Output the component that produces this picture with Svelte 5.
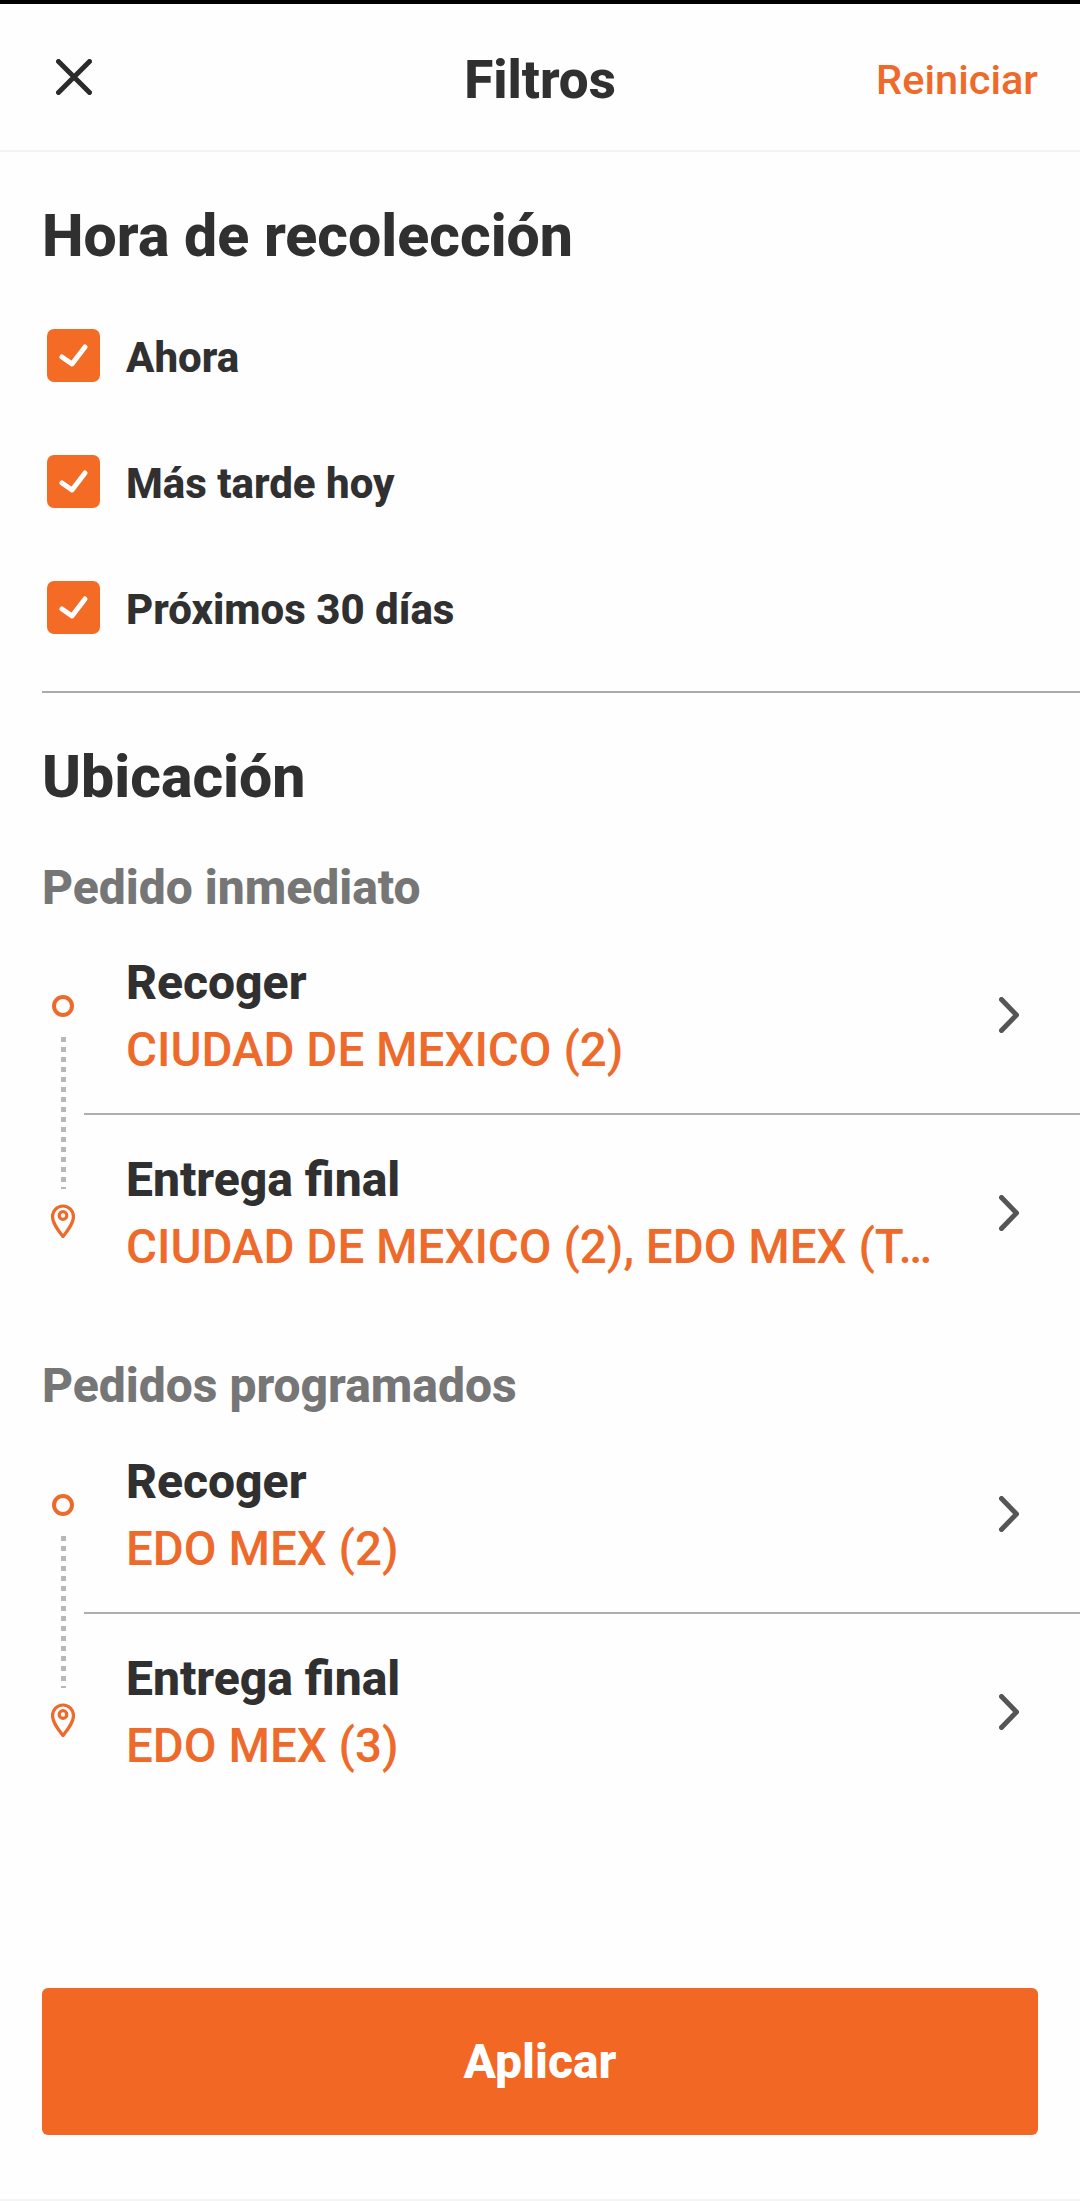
<script>
  const times = ['Ahora', 'Más tarde hoy', 'Próximos 30 días'];
  const groups = [
    { title: 'Pedido inmediato', rows: [['Recoger', 'CIUDAD DE MEXICO (2)'], ['Entrega final', 'CIUDAD DE MEXICO (2), EDO MEX (T…']] },
    { title: 'Pedidos programados', rows: [['Recoger', 'EDO MEX (2)'], ['Entrega final', 'EDO MEX (3)']] }
  ];
</script>

<div class="page">
  <div class="status"></div>
  <header class="header">
    <svg class="close" width="36" height="36" viewBox="0 0 36 36"><path d="M2.500 2.500 33.500 33.500M33.500 2.500 2.500 33.500" /></svg>
    <h1>Filtros</h1>
    <span class="reset">Reiniciar</span>
  </header>

  <main class="content">
    <section class="time">
      <h2>Hora de recolección</h2>
      <ul class="checks">
        {#each times as t}
          <li>
            <span class="box">
              <svg width="52" height="53" viewBox="0 0 52 53"><path d="M15 28 25 35 38 18" /></svg>
            </span>
            <span class="check-label">{t}</span>
          </li>
        {/each}
      </ul>
    </section>

    <section class="location">
      <h2>Ubicación</h2>
      {#each groups as g}
        <h3>{g.title}</h3>
        <div class="group">
          <div class="track">
            <svg class="origin" width="22" height="22" viewBox="0 0 22 22"><circle cx="11" cy="11" r="9" /></svg>
            <div class="dots"></div>
            <svg class="pin" width="24" height="34" viewBox="0 0 24 34">
              <path d="M12 32.500C7 26 1.500 19.500 1.500 12.500a10.500 10.500 0 0 1 21 0C22.500 19.500 17 26 12 32.500Z" />
              <circle cx="12" cy="11.500" r="3.800" />
            </svg>
          </div>
          <div class="rows">
            {#each g.rows as r, i}
              <div class="row" class:ruled={i === 0}>
                <div class="texts">
                  <div class="label">{r[0]}</div>
                  <div class="value">{r[1]}</div>
                </div>
                <svg class="chev" width="20" height="36" viewBox="0 0 20 36"><path d="M2.500 2.500 17.500 18 2.500 33.500" /></svg>
              </div>
            {/each}
          </div>
        </div>
      {/each}
    </section>
  </main>

  <div class="footer">
    <button class="apply">Aplicar</button>
  </div>
</div>

<style>
  :global(body) { margin: 0; background: #fff; }
  .page {
    width: 1080px;
    height: 2201px;
    display: flex;
    flex-direction: column;
    font-family: Roboto, sans-serif;
    color: #303030;
    background: #fefefe;
    box-sizing: border-box;
    border-bottom: 2px solid #f4f4f4;
    overflow: hidden;
  }
  .status { height: 4px; background: #000; flex: none; }
  .header {
    height: 148px;
    flex: none;
    box-sizing: border-box;
    border-bottom: 2px solid #f3f3f3;
    display: grid;
    grid-template-columns: 1fr auto 1fr;
    align-items: center;
    padding: 0 42px;
  }
  .close { margin-left: 14px; }
  .close path { stroke: #2b2b2b; stroke-width: 5; stroke-linecap: round; fill: none; }
  .header h1 { margin: 0; font-size: 53px; font-weight: 800; line-height: 62px; padding-top: 5px; }
  .reset { justify-self: end; color: #ee6a2b; font-size: 41.500px; font-weight: 500; padding-top: 4px; }
  .content { flex: 1; }
  h2 { margin: 0; font-size: 59px; font-weight: 800; line-height: 66px; }
  .time { padding: 51px 0 0 42px; }
  .checks { list-style: none; margin: 23px 0 0; padding: 0 0 21px; border-bottom: 2px solid #aaa; }
  .checks li {
    height: 126px;
    display: flex;
    align-items: center;
    gap: 26px;
    padding-left: 5px;
    font-size: 42px;
    font-weight: 800;
  }
  .check-label { padding-top: 5px; }
  .box { width: 53px; height: 53px; border-radius: 7px; background: #f46b25; display: block; flex: none; }
  .box svg { display: block; }
  .box path { stroke: #fff; stroke-width: 5; stroke-linecap: round; stroke-linejoin: round; fill: none; }
  .location h2 { padding: 51px 0 0 42px; }
  h3 { margin: 0; padding: 0 0 0 42px; color: #767676; font-size: 48px; font-weight: 800; line-height: 52px; height: 52px; }
  .location h2 + h3 { margin-top: 52px; }
  .group + h3 { margin-top: 49px; }
  .group { display: flex; margin-top: 3px; }
  .group + h3 + .group { margin-top: 4px; }
  .track {
    width: 84px;
    flex: none;
    display: flex;
    flex-direction: column;
    align-items: flex-start;
    box-sizing: border-box;
    padding-top: 78px;
  }
  .origin { margin-left: 52px; display: block; flex: none; }
  .origin circle { fill: none; stroke: #ee6a2b; stroke-width: 4; }
  .dots {
    margin: 20px 0 0 60.500px;
    width: 5px;
    height: 152px;
    background: repeating-linear-gradient(to bottom, #b8b8b8 0 5px, transparent 5px 10px);
    flex: none;
  }
  .pin { margin: 15px 0 0 51px; display: block; flex: none; }
  .pin path, .pin circle { fill: none; stroke: #ee6a2b; stroke-width: 3.200; }
  .rows { flex: 1; min-width: 0; }
  .row {
    height: 196px;
    box-sizing: border-box;
    display: flex;
    align-items: center;
    justify-content: space-between;
    padding: 0 61px 0 42px;
  }
  .row.ruled { border-bottom: 2px solid #aeaeae; height: 198px; }
  .texts { padding-bottom: 1px; }
  .ruled .texts { padding-top: 1px; padding-bottom: 0; }
  .label { font-size: 48px; font-weight: 800; line-height: 68px; }
  .value { color: #ee6a2b; font-size: 47.500px; font-weight: 500; line-height: 66px; white-space: nowrap; }
  .chev { display: block; flex: none; }
  .chev path { fill: none; stroke: #555; stroke-width: 5; stroke-linecap: round; stroke-linejoin: round; }
  .footer { flex: none; padding: 0 42px 64px; }
  .apply {
    display: block;
    width: 100%;
    height: 147px;
    border: 0;
    border-radius: 6px;
    background: #f26724;
    color: #fff;
    font-family: inherit;
    font-size: 48px;
    font-weight: 800;
  }
</style>
